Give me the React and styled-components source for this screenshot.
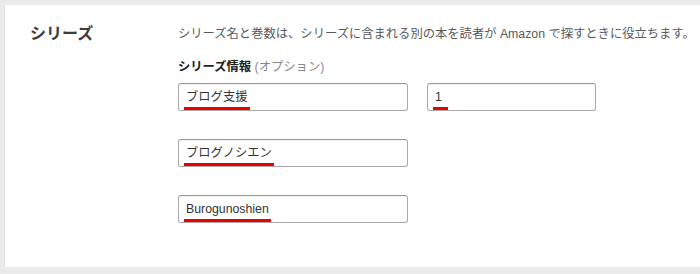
import styled, { createGlobalStyle } from "styled-components";

const GlobalStyle = createGlobalStyle`
  html, body {
    margin: 0;
    padding: 0;
    background: #ebebeb;
    overflow: hidden;
  }
  body {
    font-family: "Liberation Sans", Arial, "Noto Sans CJK JP", sans-serif;
  }
`;

const Panel = styled.section`
  margin: 5px 0 7px 4px;
  background: #fff;
  border-left: 1px solid #e2e2e2;
  padding: 20px 0 44px 25px;
  display: grid;
  grid-template-columns: 148px 1fr;
  height: 198px;
`;

const Title = styled.h2`
  margin: 0;
  font-size: 16px;
  line-height: 16px;
  font-weight: 700;
  color: #3c3c3c;
  padding-top: 1px;
`;

const Content = styled.div`
  display: flex;
  flex-direction: column;
`;

const Description = styled.p`
  margin: 0 0 15px;
  font-size: 12.3px;
  line-height: 18px;
  color: #5a5a5a;
  white-space: nowrap;
`;

const Label = styled.div`
  font-size: 12.3px;
  line-height: 18px;
  font-weight: 700;
  color: #222;
  margin-bottom: 7px;

  span {
    font-weight: 400;
    color: #888;
  }
`;

const Row = styled.div`
  display: flex;
  gap: 19px;
  margin-bottom: 28px;

  &:last-child {
    margin-bottom: 0;
  }
`;

const Field = styled.div`
  box-sizing: border-box;
  width: ${(p) => p.$width}px;
  height: 28px;
  border: 1px solid #aaa;
  border-top-color: #999;
  border-radius: 3px;
  box-shadow: inset 0 1px 1px rgba(0, 0, 0, 0.06);
  padding: 0 7px;
  display: flex;
  align-items: center;
  font-size: 12.3px;
  color: #333;
`;

const Marked = styled.span`
  position: relative;
  line-height: 16px;
  margin-top: -1px;

  &::after {
    content: "";
    position: absolute;
    left: -2px;
    right: ${(p) => -(p.$extra ?? 2)}px;
    bottom: -5px;
    height: 3px;
    background: #ee0000;
  }
`;

export default function App() {
  return (
    <>
      <GlobalStyle />
      <Panel>
        <Title>シリーズ</Title>
        <Content>
          <Description>
            シリーズ名と巻数は、シリーズに含まれる別の本を読者が Amazon で探すときに役立ちます。
          </Description>
          <Label>
            シリーズ情報 <span>(オプション)</span>
          </Label>
          <Row>
            <Field $width={230}>
              <Marked>ブログ支援</Marked>
            </Field>
            <Field $width={169}>
              <Marked $extra={6}>1</Marked>
            </Field>
          </Row>
          <Row>
            <Field $width={230}>
              <Marked>ブログノシエン</Marked>
            </Field>
          </Row>
          <Row>
            <Field $width={230}>
              <Marked>Burogunoshien</Marked>
            </Field>
          </Row>
        </Content>
      </Panel>
    </>
  );
}
